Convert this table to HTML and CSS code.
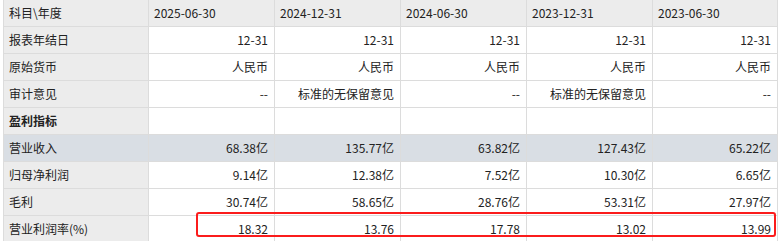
FILE: index.html
```html
<!DOCTYPE html>
<html lang="zh-CN">
<head>
<meta charset="utf-8">
<title>财务指标</title>
<link rel="stylesheet" href="styles.css">
</head>
<body>
<div class="wrap">
<table class="fin">
  <thead>
    <tr>
      <th class="label">科目\年度</th>
      <th>2025-06-30</th>
      <th>2024-12-31</th>
      <th>2024-06-30</th>
      <th>2023-12-31</th>
      <th class="last">2023-06-30</th>
    </tr>
  </thead>
  <tbody>
    <tr>
      <td class="label">报表年结日</td>
      <td>12-31</td><td>12-31</td><td>12-31</td><td>12-31</td><td class="last">12-31</td>
    </tr>
    <tr>
      <td class="label">原始货币</td>
      <td>人民币</td><td>人民币</td><td>人民币</td><td>人民币</td><td class="last">人民币</td>
    </tr>
    <tr>
      <td class="label">审计意见</td>
      <td>--</td><td>标准的无保留意见</td><td>--</td><td>标准的无保留意见</td><td class="last">--</td>
    </tr>
    <tr class="section">
      <td class="label">盈利指标</td>
      <td></td><td></td><td></td><td></td><td class="last"></td>
    </tr>
    <tr class="hl">
      <td class="label">营业收入</td>
      <td>68.38亿</td><td>135.77亿</td><td>63.82亿</td><td>127.43亿</td><td class="last">65.22亿</td>
    </tr>
    <tr>
      <td class="label">归母净利润</td>
      <td>9.14亿</td><td>12.38亿</td><td>7.52亿</td><td>10.30亿</td><td class="last">6.65亿</td>
    </tr>
    <tr>
      <td class="label">毛利</td>
      <td>30.74亿</td><td>58.65亿</td><td>28.76亿</td><td>53.31亿</td><td class="last">27.97亿</td>
    </tr>
    <tr>
      <td class="label">营业利润率(%)</td>
      <td>18.32</td><td>13.76</td><td>17.78</td><td>13.02</td><td class="last">13.99</td>
    </tr>
  </tbody>
</table>
<div class="mark"></div>
</div>
</body>
</html>
```

FILE: styles.css
```css
html, body {
  margin: 0;
  padding: 0;
  background: #ffffff;
  overflow: hidden;
}
.wrap {
  position: relative;
  padding-left: 3px;
  margin-top: -1px;
}
.fin {
  border-collapse: separate;
  border-spacing: 0;
  table-layout: fixed;
  width: 775px;
  border-left: 1px solid #dcdcdc;
  border-top: 1px solid #dcdcdc;
  font-family: "Noto Sans CJK SC", "Microsoft YaHei", sans-serif;
  font-size: 12px;
  color: #222222;
}
.fin th, .fin td {
  box-sizing: border-box;
  height: 27px;
  padding: 0 6px 0 5px;
  border-right: 1px solid #dcdcdc;
  border-bottom: 1px solid #dcdcdc;
  white-space: nowrap;
  vertical-align: middle;
  line-height: 26px;
}
.fin th {
  width: 126px;
  background: #ececec;
  font-weight: normal;
  text-align: left;
}
.fin td {
  text-align: right;
  background: #ffffff;
}
.fin .label {
  width: 145px;
  text-align: left;
  background: #ececec;
  padding-left: 5px;
}
.fin .last {
  width: 125px;
}
.fin .section .label {
  font-weight: bold;
}
.fin .hl td {
  background: #d9dee4;
}
.mark {
  position: absolute;
  left: 196px;
  top: 213px;
  width: 580px;
  height: 25px;
  box-sizing: border-box;
  border: 2.5px solid #fb1c1c;
  border-radius: 3px;
}
```
